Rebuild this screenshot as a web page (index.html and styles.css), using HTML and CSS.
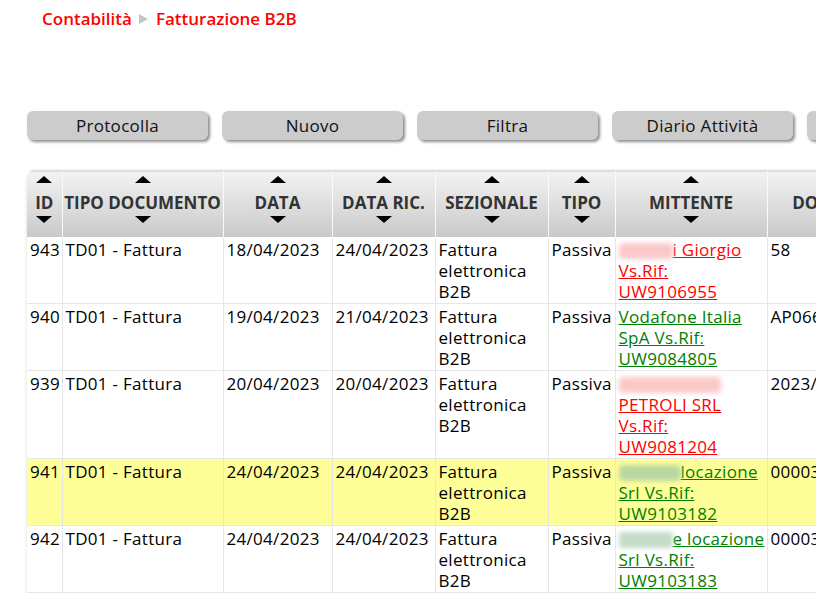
FILE: index.html
```html
<!DOCTYPE html>
<html lang="it">
<head>
<meta charset="utf-8">
<title>Fatturazione B2B</title>
<link rel="stylesheet" href="styles.css">
</head>
<body>
<div class="page">
  <nav class="crumbs">
    <a class="crumb">Contabilità</a>
    <span class="sep"></span>
    <a class="crumb">Fatturazione B2B</a>
  </nav>

  <div class="toolbar">
    <button class="btn">Protocolla</button>
    <button class="btn">Nuovo</button>
    <button class="btn">Filtra</button>
    <button class="btn">Diario Attività</button>
    <button class="btn">Esporta</button>
  </div>

  <div class="grid-wrap">
    <table class="grid">
      <colgroup>
        <col class="c-id"><col class="c-tipodoc"><col class="c-data"><col class="c-datar"><col class="c-sez"><col class="c-tipo"><col class="c-mitt"><col class="c-doc"><col class="c-rest">
      </colgroup>
      <thead>
        <tr>
          <th><span class="up"></span><span class="lbl">ID</span><span class="down"></span></th>
          <th><span class="up"></span><span class="lbl">TIPO DOCUMENTO</span><span class="down"></span></th>
          <th><span class="up"></span><span class="lbl">DATA</span><span class="down"></span></th>
          <th><span class="up"></span><span class="lbl">DATA RIC.</span><span class="down"></span></th>
          <th><span class="up"></span><span class="lbl">SEZIONALE</span><span class="down"></span></th>
          <th><span class="up"></span><span class="lbl">TIPO</span><span class="down"></span></th>
          <th><span class="up"></span><span class="lbl">MITTENTE</span><span class="down"></span></th>
          <th><span class="up"></span><span class="lbl">DOCUMENTO</span><span class="down"></span></th>
          <th><span class="up"></span><span class="lbl">IMPORTO</span><span class="down"></span></th>
        </tr>
      </thead>
      <tbody>
        <tr>
          <td>943</td><td>TD01 - Fattura</td><td>18/04/2023</td><td>24/04/2023</td>
          <td>Fattura elettronica B2B</td><td>Passiva</td>
          <td><a class="lnk red"><span class="blur b-red w54"></span>i Giorgio Vs.Rif: UW9106955</a></td>
          <td>58</td><td>120,00</td>
        </tr>
        <tr>
          <td>940</td><td>TD01 - Fattura</td><td>19/04/2023</td><td>21/04/2023</td>
          <td>Fattura elettronica B2B</td><td>Passiva</td>
          <td><a class="lnk green">Vodafone Italia SpA Vs.Rif: UW9084805</a></td>
          <td>AP066123456</td><td>85,40</td>
        </tr>
        <tr>
          <td>939</td><td>TD01 - Fattura</td><td>20/04/2023</td><td>20/04/2023</td>
          <td>Fattura elettronica B2B</td><td>Passiva</td>
          <td><a class="lnk red"><span class="blur b-red w102"></span><br>PETROLI SRL Vs.Rif: UW9081204</a></td>
          <td>2023/118</td><td>640,00</td>
        </tr>
        <tr class="hl">
          <td>941</td><td>TD01 - Fattura</td><td>24/04/2023</td><td>24/04/2023</td>
          <td>Fattura elettronica B2B</td><td>Passiva</td>
          <td><a class="lnk green"><span class="blur b-green w62"></span>locazione Srl Vs.Rif: UW9103182</a></td>
          <td>000031</td><td>350,00</td>
        </tr>
        <tr>
          <td>942</td><td>TD01 - Fattura</td><td>24/04/2023</td><td>24/04/2023</td>
          <td>Fattura elettronica B2B</td><td>Passiva</td>
          <td><a class="lnk green"><span class="blur b-gray w54"></span>e locazione Srl Vs.Rif: UW9103183</a></td>
          <td>000032</td><td>350,00</td>
        </tr>
      </tbody>
    </table>
  </div>
</div>
</body>
</html>
```

FILE: styles.css
```css
html, body {
  margin: 0;
  padding: 0;
  overflow: hidden;
  background: #fff;
}
body {
  font-family: "Open Sans", "Noto Sans", sans-serif;
  font-size: 17px;
  letter-spacing: 0.3px;
  color: #000;
}
.page {
  width: 1100px;
  padding: 0 0 0 27px;
}
.crumbs {
  display: flex;
  align-items: center;
  padding: 6px 0 0 15px;
  height: 24px;
  font-size: 17px;
  font-weight: 600;
  letter-spacing: 0;
}
.crumb {
  color: #f00;
}
.sep {
  width: 0;
  height: 0;
  margin: 1px 8px 0 7px;
  border-top: 5px solid transparent;
  border-bottom: 5px solid transparent;
  border-left: 9px solid #c4c4c4;
}
.toolbar {
  display: flex;
  gap: 14px;
  margin-top: 81px;
}
.btn {
  flex: none;
  width: 181px;
  height: 29px;
  border: 0;
  border-radius: 6px;
  background: #cccccc;
  box-shadow: 2px 2px 3px rgba(0, 0, 0, 0.45);
  font-family: inherit;
  font-size: 17px;
  letter-spacing: 0.3px;
  color: #111;
  padding: 0;
}
.grid-wrap {
  margin-top: 30px;
  width: 1040px;
  border-radius: 7px 0 0 0;
  overflow: hidden;
  box-shadow: 2px 3px 5px rgba(0, 0, 0, 0.35);
}
.grid {
  border-collapse: collapse;
  table-layout: fixed;
  width: 1040px;
}
.c-id { width: 35px; }
.c-tipodoc { width: 161px; }
.c-data { width: 109px; }
.c-datar { width: 103px; }
.c-sez { width: 113px; }
.c-tipo { width: 67px; }
.c-mitt { width: 152px; }
.c-doc { width: 163px; }
.grid th {
  height: 66px;
  padding: 0;
  background: linear-gradient(#f3f3f3, #c9c9c9);
  border-left: 1px solid #fafafa;
  border-top: 1px solid #dcdcdc;
  color: #333;
  font-size: 17px;
  font-weight: 700;
  letter-spacing: 0;
  white-space: nowrap;
  vertical-align: top;
}
.grid th:first-child { border-left: 0; }
.grid th .up,
.grid th .down {
  display: block;
  width: 0;
  height: 0;
  margin: 0 auto;
  border-left: 8px solid transparent;
  border-right: 8px solid transparent;
}
.grid th .up {
  margin-top: 5px;
  border-bottom: 7px solid #000;
}
.grid th .down {
  border-top: 7px solid #000;
}
.grid th .lbl {
  display: block;
  line-height: 20px;
  margin: 10px 0 3px;
}
.grid td {
  border: 1px solid #e6e6e6;
  padding: 2px 2px 1px 3px;
  vertical-align: top;
  line-height: 21px;
  overflow: hidden;
}
.grid tr:first-child td { border-top: 0; }
.grid td:first-child { border-left: 0; }
.grid tr.hl td { background: #ffff99; }
.lnk {
  text-decoration: underline;
}
.lnk.red { color: #f00; }
.lnk.green { color: #008000; }
.blur {
  display: inline-block;
  height: 16px;
  vertical-align: -3px;
  filter: blur(2.5px);
  border-radius: 4px;
}
.b-red { background: #fbc8c8; }
.b-green { background: #b8d8a0; }
.b-gray { background: #c5dcc8; }
.w54 { width: 54px; }
.w62 { width: 62px; }
.w102 { width: 102px; }
```
